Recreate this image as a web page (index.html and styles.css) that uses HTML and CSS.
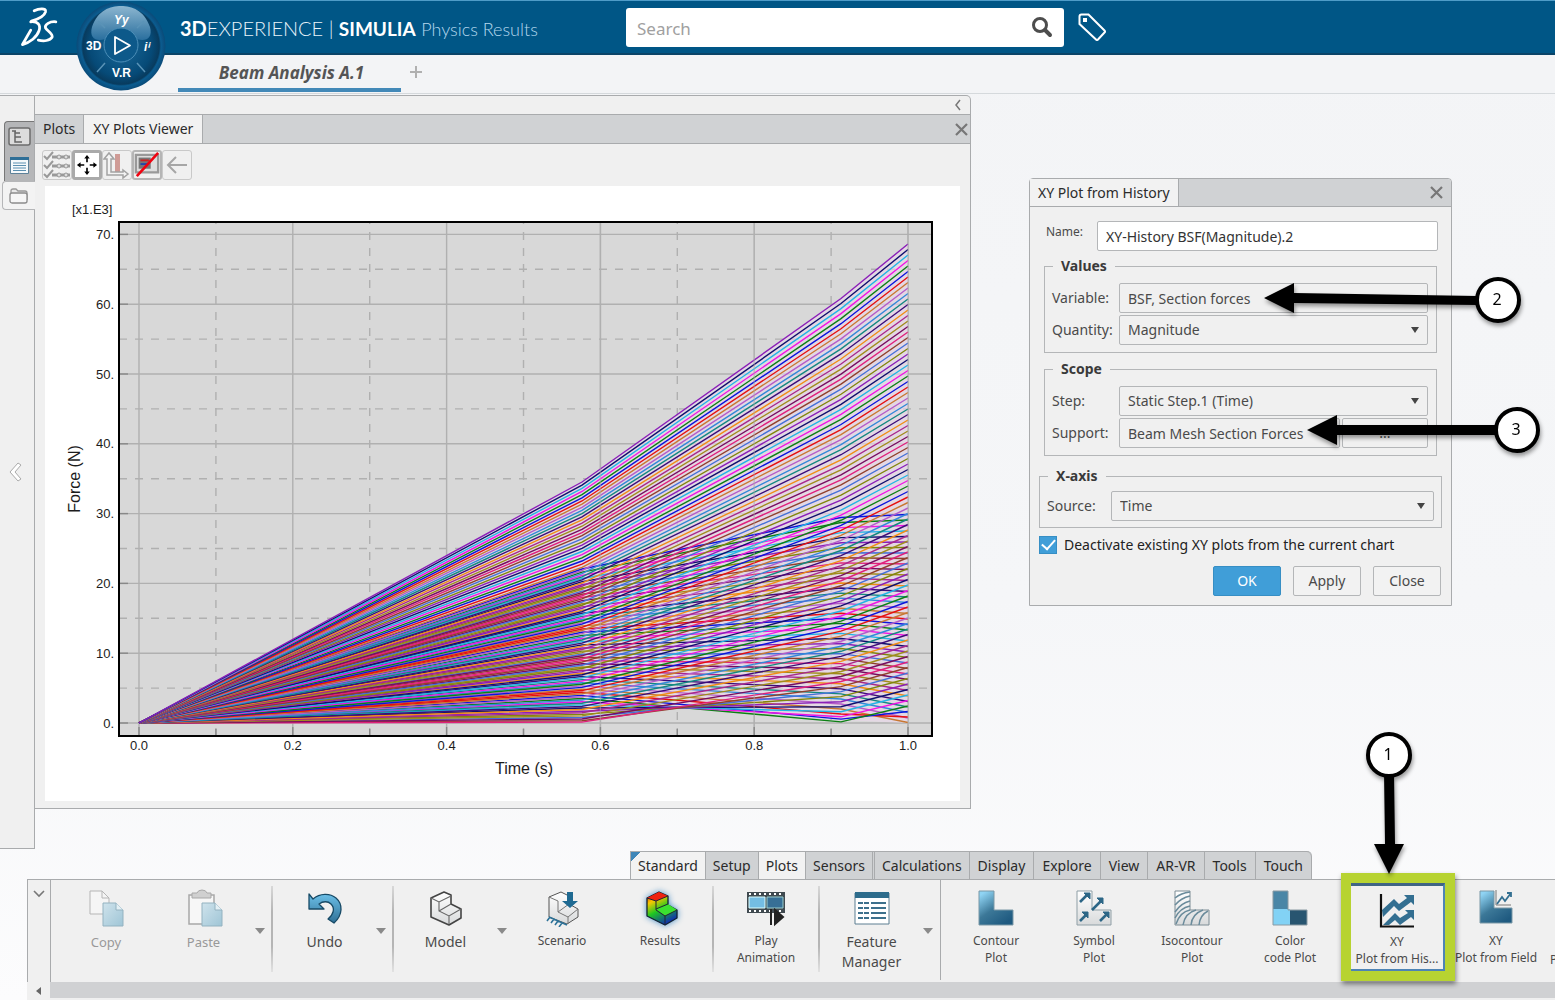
FILE: index.html
```html
<!DOCTYPE html>
<html lang="en">
<head>
<meta charset="utf-8">
<title>3DEXPERIENCE | SIMULIA Physics Results</title>
<link rel="stylesheet" href="styles.css">
</head>
<body>
<svg width="0" height="0" class="defs" aria-hidden="true">
  <defs>
    <linearGradient id="sky" x1="0" y1="0" x2="0" y2="1"><stop offset="0" stop-color="#6cc0e8"/><stop offset="1" stop-color="#2f7096"/></linearGradient>
    <linearGradient id="deep" x1="0" y1="0" x2=".7" y2="1"><stop offset=".1" stop-color="#8fd3f3"/><stop offset=".55" stop-color="#3c7898"/><stop offset="1" stop-color="#1f5a80"/></linearGradient>
    <linearGradient id="pale" x1="0" y1="0" x2="1" y2="1"><stop offset="0" stop-color="#cfe3ec"/><stop offset="1" stop-color="#9fc5d6"/></linearGradient>
    <linearGradient id="paper" x1="0" y1="0" x2="0" y2="1"><stop offset="0" stop-color="#fff"/><stop offset="1" stop-color="#d8dadb"/></linearGradient>
    <linearGradient id="heat" x1="0" y1="0" x2=".5" y2="1"><stop offset="0" stop-color="#e81010"/><stop offset=".3" stop-color="#f6c800"/><stop offset=".6" stop-color="#1fc820"/><stop offset="1" stop-color="#1038a8"/></linearGradient>
    <radialGradient id="ball" cx=".5" cy=".5" r=".5"><stop offset="0" stop-color="#1a6a9b"/><stop offset=".7" stop-color="#064a77"/><stop offset=".86" stop-color="#083b5e"/><stop offset=".9" stop-color="#0b5c90"/><stop offset="1" stop-color="#0a4a78"/></radialGradient>
    <linearGradient id="cap" x1="0" y1="0" x2="0" y2="1"><stop offset="0" stop-color="#8cb6d0"/><stop offset="1" stop-color="#2a6f9e"/></linearGradient>
  </defs>
</svg>

<header class="topbar">
  <svg class="logo" viewBox="50 22 116 122" aria-label="Dassault Systèmes">
    <g fill="none" stroke="#fff" stroke-width="8" stroke-linecap="round" stroke-linejoin="round">
      <path d="M94 36C106 30 130 26 127 39 124 50 106 60 86 66"/>
      <path d="M84 68C104 66 114 76 108 94 102 112 82 128 60 134L84 92"/>
      <path d="M157 68C140 66 123 76 127 86 132 95 150 102 146 113 140 123 122 125 106 121"/>
    </g>
  </svg>
  <svg class="compass" viewBox="0 0 90 90" role="img" aria-label="Compass">
    <circle cx="45" cy="45" r="44.500" fill="url(#ball)"/>
    <path d="M16 26C22 9 34 5 45 5s23 4 29 21c3 11-4 15-13 12-5-9-26-9-32 0-9 3-16-1-13-12z" fill="url(#cap)"/>
    <g stroke="#5a93b7" stroke-width="1.500"><path d="M22 20l7 7M68 20l-7 7M21 71l8-9M69 71l-8-9"/></g>
    <circle cx="45" cy="44" r="17" fill="#0d598a" stroke="#4d8fb8"/>
    <path d="M39 36v17l15-8.500z" fill="none" stroke="#fff" stroke-width="1.800" stroke-linejoin="round"/>
    <g class="compass-text">
      <text x="10" y="49">3D</text><text x="36" y="76">V.R</text><text x="68" y="50" font-style="italic">iⁱ</text><text x="38" y="23" font-style="italic">Yy</text>
    </g>
  </svg>
  <h1 class="brand"><b>3D</b>EXPERIENCE <span class="bar">|</span> <b class="product">SIMULIA</b> <small>Physics Results</small></h1>
  <form class="search" role="search">
    <input type="search" placeholder="Search" aria-label="Search">
    <button type="button" aria-label="Run search"><svg width="22" height="22" viewBox="0 0 22 22"><circle cx="9" cy="9" r="6.500" fill="none" stroke="#4d4d4d" stroke-width="3"/><path d="M14 14l5 5" stroke="#4d4d4d" stroke-width="4" stroke-linecap="round"/></svg></button>
  </form>
  <button class="tag" type="button" aria-label="Tags"><svg width="28" height="28" viewBox="0 0 28 28"><path d="M1.500 3.500q0-2 2-2h7L26.500 17.500q1 1 0 2l-6.500 7q-1 1-2 0L1.500 11z" fill="none" stroke="#fff" stroke-width="2"/><rect x="5" y="5" width="4" height="4" fill="#fff"/></svg></button>
</header>

<nav class="doc-tabs">
  <a class="doc-tab" href="#">Beam Analysis A.1</a>
  <button type="button" aria-label="New tab"><svg width="14" height="14" viewBox="0 0 14 14"><path d="M7 1v12M1 7h12" stroke="#b0b0b0" stroke-width="2"/></svg></button>
</nav>

<main class="workspace">
  <aside class="rail">
    <div class="rail-group">
      <button type="button" aria-label="Tree"><svg width="23" height="19" viewBox="0 0 23 19"><rect x="1" y="1" width="21" height="17" rx="2" fill="#dcdcdc" stroke="#6c6c6c" stroke-width="1.500"/><path d="M4 4h4M7 4v11h7M7 6h5M7 10h6" fill="none" stroke="#666" stroke-width="1.500"/></svg></button>
      <button type="button" aria-label="List"><svg width="19" height="17" viewBox="0 0 19 17"><path d="M.5.500h18v16H.5z" fill="#f5f9fb" stroke="#5d8199"/><path d="M0 0h19v3H0z" fill="#2f6f97"/><path d="M3 6h13M3 8.500h13M3 11h13M3 13.500h13" stroke="#5a8fb0"/></svg></button>
    </div>
    <button class="rail-tab" type="button" aria-label="Folder"><svg width="20" height="16" viewBox="0 0 20 16"><path d="M2 12V3q0-2 2-2h3l2 2h7q2 0 2 2v7" fill="#e8e8e8" stroke="#999" stroke-width="1.300"/><rect x="1" y="5" width="17" height="10" rx="2" fill="#f6f6f6" stroke="#8c8c8c" stroke-width="1.300"/></svg></button>
    <button class="rail-prev" type="button" aria-label="Previous"><svg width="16" height="22" viewBox="0 0 16 22"><path d="M10 2L2 11l8 9 3-2-6-7 6-7z" fill="#fff" stroke="#aaa"/></svg></button>
  </aside>

  <section class="plot-panel">
    <div class="panel-top"><button type="button" aria-label="Collapse panel"><svg width="8" height="12" viewBox="0 0 8 12"><path d="M6 1L2 6l4 5" fill="none" stroke="#777" stroke-width="1.500"/></svg></button></div>
    <div class="tabs panel-tabs">
      <button type="button">Plots</button><button type="button" class="on">XY Plots Viewer</button>
      <button type="button" class="close" aria-label="Close"><svg width="13" height="13" viewBox="0 0 13 13"><path d="M1 1l11 11M12 1L1 12" stroke="#777" stroke-width="2.200"/></svg></button>
    </div>
    <div class="tools-row">
      <button type="button" aria-label="Select curves"><svg width="28" height="28" viewBox="0 0 28 28"><g fill="none" stroke="#999" stroke-width="2"><path d="M1 5l3 3 6-7M1 14l3 3 6-7M1 23l3 3 6-7"/><path d="M9 6h18M9 15h18M9 24h18" stroke-width="3"/></g><g fill="#ddd" stroke="#999"><circle cx="16" cy="6" r="2"/><circle cx="23" cy="6" r="2"/><circle cx="16" cy="15" r="2"/><circle cx="23" cy="15" r="2"/><circle cx="16" cy="24" r="2"/><circle cx="23" cy="24" r="2"/></g></svg></button>
      <button type="button" class="lit" aria-label="Fit"><svg width="22" height="22" viewBox="0 0 24 24"><g stroke="#000" stroke-width="1.800"><path d="M12 4v5M12 15v5M4 12h5M15 12h5"/></g><path d="M12 1l3 4H9zM12 23l3-4H9zM1 12l4-3v6zM23 12l-4-3v6z"/></svg></button>
      <button type="button" aria-label="Axes"><svg width="28" height="28" viewBox="0 0 28 28"><path d="M12 3h5v18h-5z" fill="#cf9b96"/><path d="M4 8v16h16v3l5-4-5-4v2H8V8h3L6 2 1 8z" fill="#f4f4f4" stroke="#a2a2a2" stroke-width="1.500"/></svg></button>
      <button type="button" class="dim" aria-label="Hide legend"><svg width="26" height="26" viewBox="0 0 28 28"><path d="M2 3h24v19H2z" fill="#ddd" stroke="#999" stroke-width="2.500"/><path d="M5 6h13v12H5z" fill="#777"/><path d="M7 9h9" stroke="#c22" stroke-width="2"/><path d="M7 13h7" stroke="#24a" stroke-width="2"/><path d="M3 26L26 1" stroke="#f00310" stroke-width="2.800"/></svg></button>
      <button type="button" aria-label="Back"><svg width="24" height="24" viewBox="0 0 24 24"><path d="M22 12H3M11 4l-8 8 8 8" fill="none" stroke="#a6a6a6" stroke-width="2"/></svg></button>
    </div>
    <div class="chart">
      <svg id="chart" viewBox="45 186 915 615" role="img" aria-label="Force over time"></svg>
    </div>
  </section>

  <div class="desk">
    <form class="dialog">
      <div class="tabs dialog-title">
        <button type="button" class="on">XY Plot from History</button>
        <button type="button" class="close" aria-label="Close dialog"><svg width="13" height="13" viewBox="0 0 13 13"><path d="M1 1l11 11M12 1L1 12" stroke="#777" stroke-width="2.200"/></svg></button>
      </div>
      <div class="dialog-body">
        <div class="row name-row"><label for="name">Name:</label><input id="name" class="box white" value="XY-History BSF(Magnitude).2"></div>
        <fieldset>
          <legend>Values</legend>
          <div class="row"><label for="variable">Variable:</label><input id="variable" class="box" value="BSF, Section forces" readonly></div>
          <div class="row"><label for="quantity">Quantity:</label><span class="pick"><select id="quantity" class="box"><option>Magnitude</option></select></span></div>
        </fieldset>
        <fieldset>
          <legend>Scope</legend>
          <div class="row"><label for="step">Step:</label><span class="pick"><select id="step" class="box"><option>Static Step.1 (Time)</option></select></span></div>
          <div class="row"><label for="support">Support:</label><input id="support" class="box" value="Beam Mesh Section Forces" readonly><button type="button" class="box more">...</button></div>
        </fieldset>
        <fieldset class="wide">
          <legend>X-axis</legend>
          <div class="row"><label for="source">Source:</label><span class="pick"><select id="source" class="box"><option>Time</option></select></span></div>
        </fieldset>
        <label class="check"><input type="checkbox" checked><span>Deactivate existing XY plots from the current chart</span></label>
        <div class="actions"><button type="button" class="primary">OK</button><button type="button">Apply</button><button type="button">Close</button></div>
      </div>
      <svg class="callout two" width="258" height="52" viewBox="0 0 258 52"><path d="M0 21L30 6v10l184 3v9L30 26v10z"/><circle cx="234" cy="23" r="21"/><text x="233" y="28">2</text></svg>
      <svg class="callout three" width="236" height="52" viewBox="0 0 236 52"><path d="M0 23L30 8v10h162v10H30v10z"/><circle cx="210" cy="23" r="21"/><text x="209" y="28">3</text></svg>
    </form>
  </div>
</main>

<footer class="ribbon">
  <div class="tabs ribbon-tabs">
    <button type="button" class="on marked">Standard</button><button type="button">Setup</button><button type="button" class="on">Plots</button><button type="button" class="last">Sensors</button><button type="button">Calculations</button><button type="button">Display</button><button type="button">Explore</button><button type="button">View</button><button type="button">AR-VR</button><button type="button">Tools</button><button type="button">Touch</button>
  </div>
  <div class="ribbon-bar">
    <button class="fold" type="button" aria-label="Collapse ribbon"><svg width="12" height="8" viewBox="0 0 12 8"><path d="M1 1l5 5 5-5" fill="none" stroke="#777" stroke-width="1.600"/></svg></button>
    <button class="tool off" type="button"><svg viewBox="0 0 38 38"><path d="M3 2h12l7 7v16H3z" fill="#f5f5f5" stroke="#b5b5b5"/><path d="M15 2v7h7" fill="none" stroke="#b5b5b5"/><path d="M16 14h13l7 7v16H16z" fill="url(#pale)" stroke="#93b2c0"/><path d="M29 14v7h7" fill="#e3f0f5" stroke="#93b2c0"/></svg>Copy</button>
    <button class="tool split off" type="button"><svg viewBox="0 0 38 38"><path d="M4 6h25v29H4z" fill="#f7f7f7" stroke="#a8a8a8" stroke-width="1.500"/><path d="M7 4h5q1-3 5-3t5 3h4v5H7z" fill="#d0d0d0" stroke="#a8a8a8"/><path d="M17 14h13l7 7v16H17z" fill="url(#pale)" stroke="#93b2c0"/><path d="M30 14v7h7" fill="#e3f0f5" stroke="#93b2c0"/></svg>Paste</button>
    <button class="drop" type="button" aria-label="Paste options"></button>
    <i class="sep"></i>
    <button class="tool split" type="button"><svg viewBox="0 0 38 38"><path d="M3 5l4 5C14 4 24 4 30 9c7 6 7 17-2 25l-6-4c6-5 7-11 3-15-3-3-8-3-12 0l5 5H3z" fill="url(#sky)" stroke="#174a66" stroke-width="1.300" stroke-linejoin="round"/></svg>Undo</button>
    <button class="drop" type="button" aria-label="Undo options"></button>
    <i class="sep"></i>
    <button class="tool split" type="button"><svg viewBox="0 0 38 38"><path d="M4 9l13-6 7 3v9l10 5v9l-12 7L4 28z" fill="url(#paper)" stroke="#444" stroke-width="1.600" stroke-linejoin="round"/><path d="M4 9l8 4 12-6M12 13v9l10 5 12-7M22 27v8M12 22l12-7" fill="none" stroke="#666" stroke-width="1.100"/></svg>Model</button>
    <button class="drop" type="button" aria-label="Model options"></button>
    <button class="tool small group-start" type="button"><svg viewBox="0 0 38 38"><path d="M6 8l12-5 8 4v8l9 5v8l-11 7L6 28z" fill="url(#paper)" stroke="#555" stroke-linejoin="round"/><path d="M6 8l9 4v11l10 5 10-8M25 28v7M15 23l11-8" fill="none" stroke="#777"/><path d="M24 3h6v9h5l-8 7-8-7h5z" fill="#1f6a92"/><path d="M6 28l18 8M7 28l-3 4M11 30l-3 4M15 32l-3 4M19 34l-3 4" stroke="#2d7298" stroke-width="1.600"/></svg>Scenario</button>
    <button class="tool small" type="button"><svg class="glow" viewBox="0 0 38 38"><path d="M6 9l12-6 9 4v9l9 5v8l-12 7L6 27z" fill="url(#heat)" stroke="#123" stroke-width="1.300" stroke-linejoin="round"/><path d="M6 9l9 3 12-5-9-4z" fill="#e21"/><path d="M15 20l12-5 9 6-12 6z" fill="#3be02f"/><path d="M6 9l9 3 12-5M15 12v9l9 6 12-6M24 27v9M15 20l12-5" fill="none" stroke="#223" /></svg>Results</button>
    <i class="sep"></i>
    <button class="tool small" type="button"><svg viewBox="0 0 38 38"><path d="M0 3h38v21H0z" fill="#404a50"/><path d="M2 5h35M2 22h35" stroke="#fff" stroke-width="2" stroke-dasharray="2 3"/><path d="M2 8h16v11H2z" fill="#74bde3" stroke="#dff"/><path d="M20 8h16v11H20z" fill="#376f96" stroke="#9cc"/><path d="M24 20v16M28 21l8 7-8 7z" fill="#222" stroke="#222" stroke-width="2"/></svg>Play<br>Animation</button>
    <i class="sep"></i>
    <button class="tool split" type="button"><svg viewBox="0 0 38 38"><path d="M2 4h34v31H2z" fill="#fff" stroke="#5d7f92"/><path d="M2 3h34v6H2z" fill="#2d6c8c"/><path d="M5 14h5M5 19h5M5 24h5M5 29h5M11 14h5M11 19h5M11 24h5M11 29h5M18 14h15M18 19h15M18 24h15M18 29h15" stroke="#3d708c" stroke-width="2"/></svg>Feature<br>Manager</button>
    <button class="drop" type="button" aria-label="Feature Manager options"></button>
    <i class="sep full"></i>
    <button class="tool small group-start" type="button"><svg viewBox="0 0 38 38"><path d="M2 2h15v19h19v15H2z" fill="url(#deep)" stroke="#7b98a6"/></svg>Contour<br>Plot</button>
    <button class="tool small" type="button"><svg viewBox="0 0 38 38"><path d="M2 2h15v19h19v15H2z" fill="url(#paper)" stroke="#8f9fa6"/><g stroke="#2c6686" stroke-width="2.600" fill="#2c6686"><path d="M5 13l7-7M17 21l9-9M5 32l6-6M25 32l6-6"/><path d="M9 4h6v6zM22 9h6v6zM7 23h6v6zM28 23h6v6z" stroke-width="1"/></g></svg>Symbol<br>Plot</button>
    <button class="tool small" type="button"><svg viewBox="0 0 38 38"><path d="M2 2h15v19h19v15H2z" fill="url(#paper)" stroke="#7d8c94"/><path d="M2 9q6-5 15-6M2 16q6-7 15-9M2 23q6-9 15-11M2 29q5-10 15-12M3 35q4-12 14-14M10 36q2-12 13-15M18 36q1-11 12-15M26 36q1-10 9-14" fill="none" stroke="#6a8b9b" stroke-width="1.500"/></svg>Isocontour<br>Plot</button>
    <button class="tool small" type="button"><svg viewBox="0 0 38 38"><path d="M2 2h15v18H2z" fill="#4a86a6"/><path d="M2 20h17v16H2z" fill="#82d2f5"/><path d="M19 21h17v15H19z" fill="#285570"/><path d="M2 2h15v19h19v15H2z" fill="none" stroke="#8a9aa2"/></svg>Color<br>code Plot</button>
    <div class="picked">
      <button class="tool small" type="button"><svg viewBox="0 0 38 38"><path d="M4 18L16 7l5 5 8-6-3-3h10v10l-3-3-12 9-5-5-11 11z" fill="#336f91"/><path d="M5 33l12-12 5 5 8-5-3-3h9v10l-3-3-11 8-5-5-6 5z" fill="#336f91"/><path d="M3 2v32.500h33" fill="none" stroke="#111" stroke-width="2.200"/></svg>XY<br>Plot from His...</button>
      <svg class="callout one" width="50" height="150" viewBox="0 0 50 150"><path d="M20 40h10l1 72h9l-15 30-15-30h11z"/><circle cx="25" cy="23" r="21"/><text x="24" y="28">1</text></svg>
    </div>
    <button class="tool small" type="button"><svg viewBox="0 0 38 38"><path d="M3 2h14v17h18v15H3z" fill="url(#deep)" stroke="#7b98a6"/><path d="M19 1v15h15" fill="none" stroke="#777"/><path d="M20 15l5-7 3 4 6-8M30 4h4v4" fill="none" stroke="#336f91" stroke-width="1.800"/></svg>XY<br>Plot from Field</button>
    <button class="tool small cut" type="button">P</button>
  </div>
  <div class="scroll"><button type="button" aria-label="Scroll left"></button><div class="thumb"></div></div>
</footer>
<script src="chart.js"></script>
</body>
</html>
```
FILE: styles.css
```css
* { box-sizing: border-box; }
body {
  margin: 0;
  min-height: 100vh;
  display: flex;
  flex-direction: column;
  overflow-x: hidden;
  font: 14px/18px "Noto Sans", sans-serif;
  color: #4a4a4a;
  background: linear-gradient(180deg, #f3f4f6, #f5f6f8 60%, #fcfcfd);
}
button, input, select { font: inherit; color: inherit; }
button { border: 0; padding: 0; margin: 0; background: none; }
svg { display: block; }
.defs { position: absolute; }

/* top bar */
.topbar {
  position: relative;
  display: flex;
  align-items: center;
  height: 55px;
  padding-left: 19px;
  background: #005686;
  border-top: 1px solid #4e9cc8;
  border-bottom: 2px solid #0a4468;
}
.logo { width: 40px; height: 42px; flex: none; }
.compass { position: absolute; left: 76px; top: 0; width: 90px; height: 90px; z-index: 2; }
.compass-text { font: bold 12px "Liberation Sans Narrow", "Liberation Sans", sans-serif; fill: #fff; }
.brand {
  flex: none;
  width: 446px;
  margin: 0 0 0 121px;
  padding-top: 2px;
  font: 300 20px/24px Lato, sans-serif;
  color: #e9f3fa;
  white-space: nowrap;
}
.brand b { font-weight: 700; color: #fff; }
.brand .product { font-size: 19px; }
.brand small { font-size: 18px; color: #b5d8ee; }
.search {
  display: flex;
  align-items: center;
  flex: 0 1 438px;
  height: 39px;
  padding: 0 11px;
  background: #fff;
  border-radius: 3px;
}
.search input { flex: 1; min-width: 0; border: 0; outline: 0; padding: 3px 0 0; font-size: 17px; background: none; }
.search input::placeholder { color: #a0a0a0; }
.tag { margin-left: 14px; }

.doc-tabs {
  display: flex;
  align-items: stretch;
  height: 39px;
  padding-left: 178px;
  background: #f3f4f6;
  border-bottom: 1px solid #d5d9dc;
}
.doc-tab {
  width: 223px;
  border-bottom: 4px solid #4389b8;
  margin-bottom: 1px;
  padding-left: 4px;
  text-align: center;
  font: italic bold 17px/36px "Noto Sans", sans-serif;
  color: #555;
  text-decoration: none;
}
.doc-tabs button { padding: 0 0 4px 8px; }

/* workspace */
.workspace {
  flex: 1;
  display: grid;
  grid-template-columns: 35px minmax(0, 936fr) minmax(0, 584fr);
  padding-top: 1px;
}
.rail {
  display: flex;
  flex-direction: column;
  align-items: flex-end;
  height: 754px;
  padding-top: 25px;
  background: #f0f0f0;
  border: solid #a9abad;
  border-width: 1px 1px 1px 0;
}
.rail-group {
  display: grid;
  place-items: center;
  width: 30px;
  height: 60px;
  padding-bottom: 2px;
  background: #b5b6b8;
  border: solid #777;
  border-width: 1px 0 0 1px;
  border-radius: 4px 0 0 0;
}
.rail-tab {
  display: grid;
  place-items: center;
  width: 33px;
  height: 29px;
  margin-right: -1px;
  background: #f3f3f3;
  border: 1px solid #b5b6b8;
  border-right: 0;
  border-radius: 4px 0 0 4px;
}
.rail-prev { margin: 251px 10px 0 0; }

.plot-panel {
  align-self: start;
  background: #f0f0f0;
  border: solid #a9abad;
  border-width: 1px 1px 1px 0;
  border-radius: 0 5px 0 0;
}
.panel-top { display: flex; justify-content: flex-end; align-items: center; height: 18px; padding-right: 8px; }

.tabs { display: flex; background: #d0d2d4; border: solid #a9abad; border-width: 1px 0; color: #2b2b2b; }
.tabs button { height: 28px; padding: 0 8px; border-right: 1px solid #a9abad; white-space: nowrap; }
.tabs .on { background: #f2f2f2; margin-bottom: -1px; }
.tabs .close { margin-left: auto; padding: 0 2px; border: 0; }
.panel-tabs .on { padding: 0 9px; }
.tools-row { display: flex; padding: 6px 0 6px 7px; }
.tools-row button { display: grid; place-items: center; width: 30px; height: 30px; border: 1px solid #c9c9c9; border-radius: 3px; }
.tools-row .lit { background: #fff; border: 3px solid #aaa; }
.tools-row .dim { border: 2px solid #b5b5b5; }
.chart { margin: 0 10px 7px; background: #fff; }
.chart svg { width: 100%; height: auto; }
.chart text { font-family: "Liberation Sans", sans-serif; fill: #1c1c1c; font-size: 13px; }
.chart .axis-title { font-size: 16px; }

/* dialog */
.desk { padding: 83px 0 0 58px; }
.dialog { position: relative; width: 423px; background: #f0f0f0; border: 1px solid #a9abad; border-radius: 4px 4px 0 0; }
.dialog-title { border-top: 0; border-radius: 4px 4px 0 0; }
.dialog-title button { height: 27px; padding: 0 8px; }
.dialog-title .close { padding: 0 8px; }
.dialog-body { padding: 14px 9px 9px; }
.row { display: flex; align-items: center; }
.row + .row { margin-top: 2px; }
.row label { flex: none; width: 67px; }
.box {
  flex: 1;
  min-width: 0;
  width: 100%;
  height: 30px;
  margin: 0;
  padding: 0 8px;
  background: #f0f0f0;
  border: 1px solid #b4b6b8;
  border-radius: 2px;
  outline: 0;
}
.box.white { background: #fff; color: #333; }
.box.more { flex: 0 0 86px; margin-left: 2px; }
.name-row { padding: 0 4px 6px 7px; }
.name-row label { width: 51px; padding-bottom: 8px; font-size: 12px; }
select.box { appearance: none; }
.pick { position: relative; flex: 1; display: flex; }
.pick::after {
  content: "";
  position: absolute;
  right: 9px;
  top: 12px;
  border: solid transparent;
  border-width: 6px 4px 0;
  border-top-color: #444;
  pointer-events: none;
}
fieldset { min-width: 0; margin: 0 5px 7px; padding: 8px 8px 7px 7px; border: 1px solid #b4b6b8; }
legend { margin-left: 1px; padding: 0 8px; font-weight: bold; line-height: 18px; color: #3a3a3a; }
fieldset.wide { margin: 11px 0 0; padding: 6px 7px 6px; }
.wide .row label { width: 64px; }
.check { display: flex; align-items: center; height: 18px; margin-top: 8px; color: #222; }
.check input { appearance: none; width: 18px; height: 18px; margin: 0 7px 0 0; background: #409ed8; border: 1px solid #368ec4; display: grid; place-items: center; }
.check input::after { content: ""; width: 11px; height: 6px; margin-bottom: 4px; border: solid #fff; border-width: 0 0 2px 2px; transform: rotate(-48deg); }
.actions { display: flex; justify-content: flex-end; gap: 12px; margin-top: 12px; padding-right: 1px; }
.actions button { width: 68px; height: 30px; border: 1px solid #b4b6b8; border-radius: 2px; background: #f2f2f2; }
.actions .primary { background: #409ed8; border-color: #368ec4; color: #fff; }

.callout { position: absolute; z-index: 5; filter: drop-shadow(1px 3px 2px #0006); pointer-events: none; overflow: visible; }
.callout path { fill: #000; }
.callout circle { fill: #fff; stroke: #000; stroke-width: 4px; }
.callout text { font: 16px "Noto Sans", sans-serif; fill: #000; text-anchor: middle; }
.two { left: 234px; top: 98px; }
.three { left: 277px; top: 228px; }

/* ribbon */
.ribbon { flex: none; padding-left: 27px; }
.ribbon-tabs { width: max-content; margin-left: 603px; border-width: 1px 0 0 1px; border-radius: 0 5px 0 0; }
.ribbon-tabs button { height: 27px; padding: 0 7px; }
.ribbon-tabs button:nth-child(n+6) { padding: 0 8px; }
.ribbon-tabs button:last-child { border-radius: 0 5px 0 0; }
.ribbon-tabs .on { margin: 0; }
.ribbon-tabs .last { border-right: 3px double #a9abad; }
.ribbon-tabs .marked { background: linear-gradient(135deg, #3e86b8 7px, #f2f2f2 7px); }
.ribbon-bar { display: flex; height: 103px; background: #f0f0f0; border: solid #a9abad; border-width: 1px 0 0 1px; }
.fold { flex: none; width: 23px; margin-right: 6px; padding: 10px 5px 0; display: flex; justify-content: center; border-right: 1px solid #a9abad; }
.tool { flex: none; align-self: flex-start; width: 98px; padding-top: 9px; line-height: 20px; white-space: nowrap; }
.tool svg { width: 38px; height: 38px; margin: 0 auto 5px; }
.tool.small { font-size: 12px; line-height: 17px; }
.tool.split { width: 97px; }
.off { color: #999; font-size: 13px; }
.glow { filter: drop-shadow(0 0 3px #4a90c8); }
.group-start { margin-left: 3px; }
.drop { flex: none; width: 16px; display: grid; place-items: start center; padding-top: 48px; }
.drop::after { content: ""; border: solid transparent; border-width: 6px 5px 0; border-top-color: #8a8a8a; }
.sep { flex: none; width: 2px; height: 86px; margin: 6px 3px 0; background: linear-gradient(#d8d8d8, #b5b5b5 30%, #b5b5b5 70%, #e2e2e2); }
.sep.full { width: 1px; height: 100px; margin: 0 3px 0 4px; background: #a9abad; }
.picked { position: relative; flex: none; width: 114px; height: 108px; margin: -7px -8px 0 2px; border: 10px solid #b7d331; box-shadow: 1px 3px 5px #0007; z-index: 3; background: #f0f0f0; }
.picked .tool { width: 94px; height: 88px; padding-top: 3px; border: 2px solid #4d84b5; border-left: 0; border-top: 3px solid #3f6484; }
.picked .tool svg { margin-bottom: 3px; }
.one { left: 13px; top: -151px; }
.cut { width: 16px; padding: 71px 0 0 5px; text-align: left; overflow: hidden; }
.scroll { display: flex; height: 18px; background: #f0f0f0; }
.scroll button { width: 23px; display: grid; place-items: center; }
.scroll button::after { content: ""; border: solid transparent; border-width: 4px 5px 4px 0; border-right-color: #666; }
.thumb { flex: 1; margin-bottom: 2px; background: #d0d1d3; }
```
FILE: chart.js
```js
const NS = "http://www.w3.org/2000/svg";
const chart = document.getElementById("chart");

function add(name, attrs, text) {
  const el = document.createElementNS(NS, name);
  for (const key in attrs) el.setAttribute(key, attrs[key]);
  if (text) el.textContent = text;
  chart.appendChild(el);
}

const LEFT = 119, RIGHT = 932, TOP = 222, BOTTOM = 736;
const px = t => 139 + 769 * t;
const py = f => 723 - 6.98 * f;

add("rect", { x: LEFT, y: TOP, width: RIGHT - LEFT, height: BOTTOM - TOP, fill: "#d8d8d8" });

const rule = (d, attrs) => add("path", Object.assign({ d, stroke: "#b0b0b0", "stroke-width": 1.4, fill: "none" }, attrs));
for (let i = 0; i <= 10; i++) {
  rule(`M${px(i / 10)} ${BOTTOM}V${TOP}`, i % 2 ? { "stroke-dasharray": "8 8" } : {});
}
for (let i = 0; i <= 14; i++) {
  rule(`M${LEFT} ${py(i * 5)}H${RIGHT}`, i % 2 ? { "stroke-dasharray": "8 8" } : {});
}

// Light halo behind the bundle of curves.
add("path", { d: "M139 723L582 482 841 298 908 244V723L841 720 681 706 582 723z", fill: "#ecd8ec", "fill-opacity": 0.6 });

const colors = ["#8a1fb8", "#10106e", "#22b4e4", "#f014e4", "#0c8014", "#0c14dc", "#e61010", "#c87832", "#b45cc8", "#3288d8",
  "#148880", "#3c0c78", "#f08c14", "#a8288c", "#a08c1c", "#780c60", "#e0207c", "#90402c", "#4470d8", "#80860c"];

// Section-force magnitude at the three solved increments, one curve per beam element.
for (let k = 125; k >= 0; k--) {
  const a = 723 - Math.abs(241 - 3.16 * k);
  const b = 723 - Math.abs(424.5 - 5.04 * k);
  const c = 723 - Math.abs(479 - 5.5 * k);
  add("path", { d: `M139 723L582 ${a}L841 ${b}L908 ${c}`, fill: "none", stroke: colors[k % 20], "stroke-width": 1.4 });
}

for (const t of [0.6, 0.8, 1]) rule(`M${px(t)} ${BOTTOM}V${TOP}`, { "stroke-opacity": 0.5 });
for (let i = 0; i <= 10; i++) rule(`M${px(i / 10)} ${BOTTOM}v${i % 2 ? -7 : -9}`, { stroke: "#888" });
for (let i = 0; i <= 7; i++) rule(`M${LEFT} ${py(i * 10)}h9`, { stroke: "#888" });
add("rect", { x: LEFT, y: TOP, width: RIGHT - LEFT, height: BOTTOM - TOP, fill: "none", stroke: "#000", "stroke-width": 2 });

add("text", { x: 72, y: 214 }, "[x1.E3]");
for (let i = 0; i <= 7; i++) add("text", { x: 114, y: py(i * 10) + 4.5, "text-anchor": "end" }, i ? i * 10 + "." : "0.");
for (let i = 0; i <= 5; i++) add("text", { x: px(i / 5), y: 750, "text-anchor": "middle" }, (i / 5).toFixed(1));
add("text", { x: 524, y: 774, "text-anchor": "middle", class: "axis-title" }, "Time (s)");
add("text", { x: 80, y: 479, "text-anchor": "middle", class: "axis-title", transform: "rotate(-90 80 479)" }, "Force (N)");
```
